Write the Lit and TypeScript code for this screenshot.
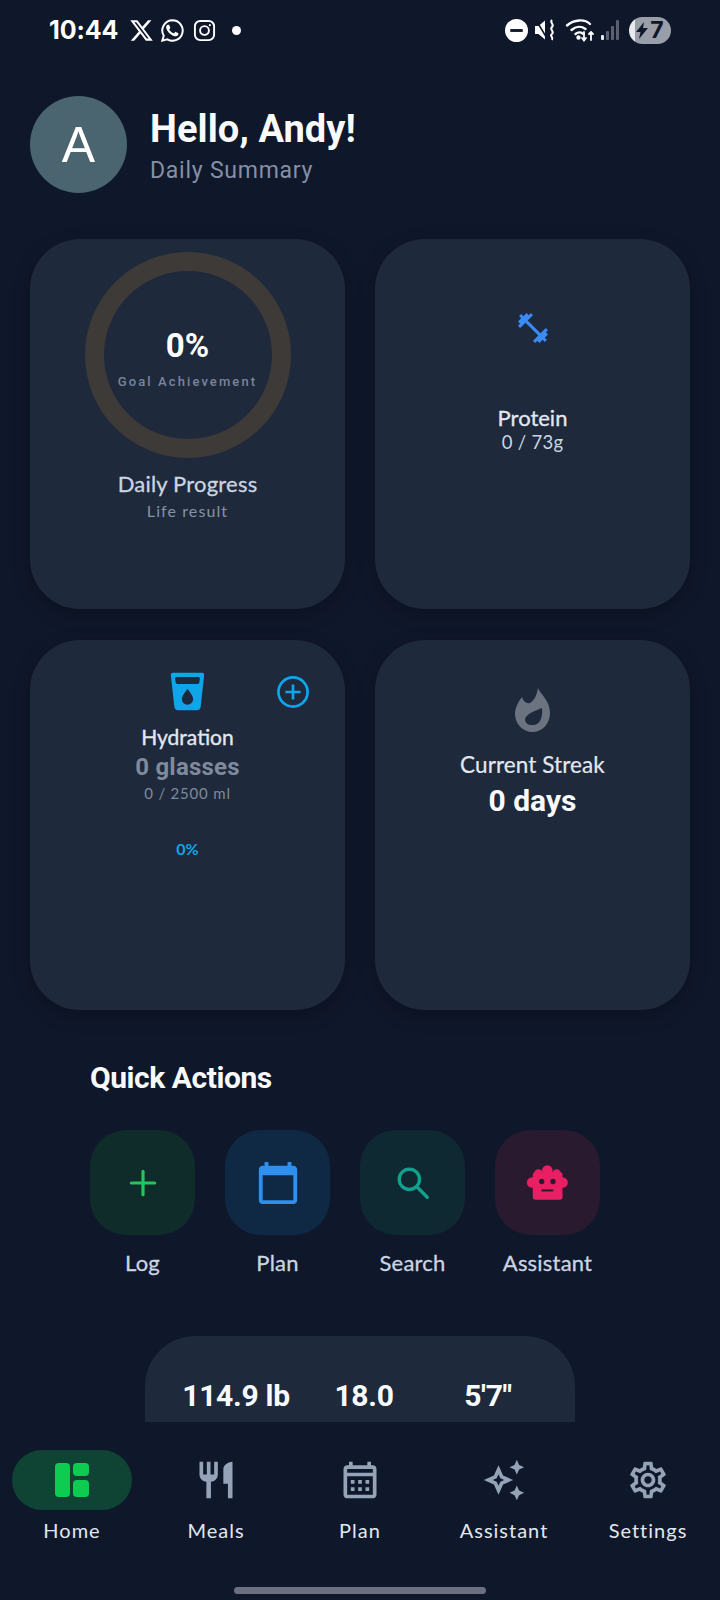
import {LitElement, html, css} from 'lit';
import {customElement} from 'lit/decorators.js';

const P = {
  dumbbell: 'M20.57 14.86L22 13.43 20.57 12 17 15.57 8.43 7 12 3.43 10.57 2 9.14 3.43 7.71 2 5.57 4.14 4.14 2.71 2.71 4.14l1.43 1.43L2 7.71l1.43 1.43L2 10.57 3.43 12 7 8.43 15.57 17 12 20.57 13.43 22l1.43-1.43L16.29 22l2.14-2.14 1.43 1.43 1.43-1.43-1.43-1.43L22 16.29z',
  cup: 'M4.2 2h15.6c.7 0 1.2.6 1.1 1.2L19 20.2c-.1 1-1 1.8-2 1.8H7c-1 0-1.9-.8-2-1.8L3.1 3.2C3 2.6 3.5 2 4.2 2zM6.2 4.2c-.5 0-.8.4-.8.8l.3 2.2c.1.4.4.8.9.8h10.8c.5 0 .8-.4.9-.8l.3-2.2c0-.4-.3-.8-.8-.8zM12 10.6s-3 3.4-3 5.4c0 1.66 1.34 3 3 3s3-1.34 3-3c0-2-3-5.4-3-5.4z',
  calendar: 'M20 3h-1V1h-2v2H7V1H5v2H4c-1.1 0-2 .9-2 2v16c0 1.1.9 2 2 2h16c1.1 0 2-.9 2-2V5c0-1.1-.9-2-2-2zm0 18H4V8h16v13z',
  fork: 'M11 9H9V2H7v7H5V2H3v7c0 2.12 1.66 3.84 3.75 3.97V22h2.5v-9.03C11.34 12.84 13 11.12 13 9V2h-2v7zm5-3v8h2.5v8H21V2c-2.76 0-5 2.24-5 4z',
  month: 'M19 4h-1V2h-2v2H8V2H6v2H5c-1.11 0-1.99.9-1.99 2L3 20c0 1.1.89 2 2 2h14c1.1 0 2-.9 2-2V6c0-1.1-.9-2-2-2zm0 16H5V10h14v10zm0-12H5V6h14v2zM9 14H7v-2h2v2zm4 0h-2v-2h2v2zm4 0h-2v-2h2v2zm-8 4H7v-2h2v2zm4 0h-2v-2h2v2zm4 0h-2v-2h2v2z',
  sparkle: 'M19 9l1.25-2.75L23 5l-2.75-1.25L19 1l-1.25 2.75L15 5l2.75 1.25L19 9zm-7.5.5L9 4 6.5 9.5 1 12l5.5 2.5L9 20l2.5-5.5L17 12l-5.5-2.5zM9.99 12.99L9 15.17l-.99-2.18L5.83 12l2.18-.99L9 8.83l.99 2.18 2.18.99-2.18.99zM19 15l-1.25 2.75L15 19l2.75 1.25L19 23l1.25-2.75L23 19l-2.75-1.25L19 15z',
  gear: 'M19.43 12.98c.04-.32.07-.64.07-.98 0-.34-.03-.66-.07-.98l2.11-1.65c.19-.15.24-.42.12-.64l-2-3.46c-.09-.16-.26-.25-.44-.25-.06 0-.12.01-.17.03l-2.49 1c-.52-.4-1.08-.73-1.69-.98l-.38-2.65C14.46 2.18 14.25 2 14 2h-4c-.25 0-.46.18-.49.42l-.38 2.65c-.61.25-1.17.59-1.69.98l-2.49-1c-.06-.02-.12-.03-.18-.03-.17 0-.34.09-.43.25l-2 3.46c-.13.22-.07.49.12.64l2.11 1.65c-.04.32-.07.65-.07.98 0 .33.03.66.07.98l-2.11 1.65c-.19.15-.24.42-.12.64l2 3.46c.09.16.26.25.44.25.06 0 .12-.01.17-.03l2.49-1c.52.4 1.08.73 1.69.98l.38 2.65c.03.24.24.42.49.42h4c.25 0 .46-.18.49-.42l.38-2.65c.61-.25 1.17-.59 1.69-.98l2.49 1c.06.02.12.03.18.03.17 0 .34-.09.43-.25l2-3.46c.12-.22.07-.49-.12-.64l-2.11-1.65zm-1.98-1.71c.04.31.05.52.05.73 0 .21-.02.43-.05.73l-.14 1.13.89.7 1.08.84-.7 1.21-1.27-.51-1.04-.42-.9.68c-.43.32-.84.56-1.25.73l-1.06.43-.16 1.13-.2 1.35h-1.4l-.19-1.35-.16-1.13-1.06-.43c-.43-.18-.83-.41-1.23-.71l-.91-.7-1.06.43-1.27.51-.7-1.21 1.08-.84.89-.7-.14-1.13c-.03-.31-.05-.54-.05-.74s.02-.43.05-.73l.14-1.13-.89-.7-1.08-.84.7-1.21 1.27.51 1.04.42.9-.68c.43-.32.84-.56 1.25-.73l1.06-.43.16-1.13.2-1.35h1.39l.19 1.35.16 1.13 1.06.43c.43.18.83.41 1.23.71l.91.7 1.06-.43 1.27-.51.7 1.21-1.07.85-.89.7.14 1.13zM12 8c-2.21 0-4 1.79-4 4s1.79 4 4 4 4-1.79 4-4-1.79-4-4-4zm0 6c-1.1 0-2-.9-2-2s.9-2 2-2 2 .9 2 2-.9 2-2 2z',
  x: 'M18.244 2.25h3.308l-7.227 8.26 8.502 11.24H16.17l-5.214-6.817L4.99 21.75H1.68l7.73-8.835L1.254 2.25H8.08l4.713 6.231zm-1.161 17.52h1.833L7.084 4.126H5.117z',
};

const icon = (d: string, size: number, color: string) => html`
  <svg width=${size} height=${size} viewBox="0 0 24 24" style="color:${color}" fill="currentColor" fill-rule="evenodd"><path d=${d}></path></svg>
`;

const actions = [
  {
    label: 'Log',
    bg: '#0f2b2a',
    glyph: html`<svg width="40" height="40" viewBox="0 0 24 24" fill="none" stroke="#22c55e" stroke-width="1.9" stroke-linecap="round"><path d="M12 5v14M5 12h14"></path></svg>`,
  },
  {label: 'Plan', bg: '#0f2844', glyph: icon(P.calendar, 46, '#2f8fec')},
  {
    label: 'Search',
    bg: '#0f2933',
    glyph: html`<svg width="38" height="38" viewBox="0 0 24 24" fill="none" stroke="#14a08c" stroke-width="2.1" stroke-linecap="round"><circle cx="9.7" cy="9.7" r="6.4"></circle><path d="M14.4 14.4L21 21"></path></svg>`,
  },
  {
    label: 'Assistant',
    bg: '#2a1a30',
    glyph: html`<svg width="45" height="37" viewBox="525 160 135 112" fill="#e91e63">
      <circle cx="592" cy="180" r="16"></circle>
      <circle cx="565" cy="190" r="14"></circle>
      <circle cx="620" cy="190" r="14"></circle>
      <circle cx="546" cy="216" r="16"></circle>
      <circle cx="638" cy="216" r="16"></circle>
      <rect x="548" y="185" width="90" height="83" rx="8"></rect>
      <circle cx="575" cy="213" r="8" fill="#2a1a30"></circle>
      <circle cx="609" cy="213" r="8" fill="#2a1a30"></circle>
      <rect x="574" y="237" width="36" height="6" fill="#2a1a30"></rect>
    </svg>`,
  },
];

const nav = [
  {label: 'Meals', d: P.fork},
  {label: 'Plan', d: P.month},
  {label: 'Assistant', d: P.sparkle},
  {label: 'Settings', d: P.gear},
];

@customElement('app-root')
export class AppRoot extends LitElement {
  static styles = css`
    :host {
      display: block;
      width: 720px;
      height: 1600px;
      background: #0f172a;
      color: #fff;
      font-family: Roboto, sans-serif;
      overflow: hidden;
    }
    svg { display: block; flex: none; }

    .page { display: flex; flex-direction: column; height: 1600px; }
    .scroll { height: 1422px; flex: none; overflow: hidden; }

    .status {
      height: 60px;
      display: flex;
      align-items: center;
      padding: 0 49px 0 49px;
      justify-content: space-between;
    }
    .status-left, .status-right { display: flex; align-items: center; }
    .time { font: 700 25px/30px Inter, sans-serif; letter-spacing: -0.1px; margin-right: 11px; }
    .status-left svg { margin-right: 6px; }
    .dot { width: 9px; height: 9px; border-radius: 50%; background: #fff; margin-left: 10px; }
    .battery {
      width: 42px;
      height: 27px;
      border-radius: 14px;
      background: linear-gradient(90deg, #e8eaee 0 6px, #9a9ea8 6px);
      color: #0f172a;
      display: flex;
      align-items: center;
      justify-content: center;
      gap: 2px;
      font: 700 23px/27px Inter, sans-serif;
      margin-left: 9px;
    }

    .header { display: flex; align-items: center; gap: 23px; padding: 36px 30px 0; }
    .avatar {
      width: 97px;
      height: 97px;
      border-radius: 50%;
      background: #4a6470;
      display: flex;
      align-items: center;
      justify-content: center;
      font: 400 50px/1 "Liberation Sans", sans-serif;
    }
    .hello { padding-top: 3px; }
    h1 { margin: 0; font: 700 38px/44px Roboto, sans-serif; letter-spacing: 0.1px; color: #f8fafc; }
    .sub { font: 400 23px/30px Roboto, sans-serif; color: #8590a6; letter-spacing: 0.75px; margin-top: 5px; }

    .grid {
      display: grid;
      grid-template-columns: 315px 315px;
      grid-auto-rows: 370px;
      gap: 31px 30px;
      padding: 46px 30px 0;
    }
    .card {
      background: #1e293b;
      border-radius: 50px;
      box-shadow: 0 6px 18px rgba(0, 0, 0, 0.25);
      display: flex;
      flex-direction: column;
      align-items: center;
      text-align: center;
      font-family: Lato, sans-serif;
      position: relative;
    }
    .ring {
      box-sizing: border-box;
      width: 206px;
      height: 206px;
      margin-top: 13px;
      border: 19px solid #3d3a38;
      border-radius: 50%;
      display: flex;
      flex-direction: column;
      align-items: center;
      padding-top: 56px;
    }
    .pct { font: 700 33px/38px Roboto, sans-serif; }
    .goal { font: 500 13px/18px Roboto, sans-serif; letter-spacing: 2.1px; color: #7a859b; margin-top: 8px; white-space: nowrap; }
    .title { font-size: 22px; line-height: 26px; color: #cbd5e1; -webkit-text-stroke: 0.3px currentColor; }
    .note { font-size: 16px; line-height: 20px; color: #8892a6; letter-spacing: 1.1px; margin-top: 4px; }
    .progress-title { margin-top: 13px; letter-spacing: 0.2px; }

    .protein-icon { margin-top: 71px; }
    .protein-title { margin-top: 59px; color: #e2e8f0; }
    .protein-val { font-size: 18.5px; line-height: 23px; color: #cbd5e1; letter-spacing: 0.3px; }

    .cup { margin-top: 29px; }
    .add { position: absolute; top: 33px; left: 244px; }
    .hyd-title { font-size: 21px; line-height: 24px; margin-top: 11px; color: #e2e8f0; -webkit-text-stroke: 0.35px currentColor; }
    .glasses { font: 700 24px/28px Roboto, sans-serif; color: #7f8a9c; letter-spacing: 0.2px; margin-top: 4px; }
    .ml { font-size: 15px; line-height: 20px; color: #7f8a9c; letter-spacing: 0.8px; margin-top: 2px; }
    .hyd-pct { font-size: 16px; line-height: 20px; font-weight: 700; color: #0ea5e9; margin-top: 36px; }

    .flame { margin-top: 48px; }
    .streak-title { font-size: 22.5px; line-height: 26px; color: #e2e8f0; margin-top: 20px; letter-spacing: 0.1px; -webkit-text-stroke: 0.2px currentColor; }
    .streak-val { font: 700 30px/36px Roboto, sans-serif; color: #f8fafc; margin-top: 5px; }

    .quick { padding: 50px 90px 0; }
    h2 { margin: 0; font: 700 30px/36px Roboto, sans-serif; letter-spacing: -0.45px; color: #f8fafc; }
    .tiles { display: flex; gap: 30px; margin-top: 34px; }
    .tile { width: 105px; display: flex; flex-direction: column; align-items: center; font-family: Lato, sans-serif; }
    .tile-box { width: 105px; height: 105px; border-radius: 36px; display: flex; align-items: center; justify-content: center; }
    .tile-label { margin-top: 15px; font-size: 22px; line-height: 26px; letter-spacing: 0.2px; color: #cbd5e1; white-space: nowrap; -webkit-text-stroke: 0.3px currentColor; }

    .stats {
      margin: 60px 0 0 145px;
      width: 430px;
      height: 160px;
      box-sizing: border-box;
      background: #1e293b;
      border-radius: 50px;
      display: grid;
      grid-template-columns: 182px 74px 174px;
      padding-top: 41px;
      font: 700 30px/38px Roboto, sans-serif;
      letter-spacing: -0.3px;
      color: #f8fafc;
      text-align: center;
      align-items: start;
    }

    .nav {
      display: grid;
      grid-template-columns: repeat(5, 144px);
      padding-top: 28px;
      font-family: Lato, sans-serif;
    }
    .nav-item { display: flex; flex-direction: column; align-items: center; }
    .nav-icon { width: 120px; height: 60px; border-radius: 30px; display: flex; align-items: center; justify-content: center; }
    .nav-icon.on { background: #0f4434; }
    .nav-label { margin-top: 7px; font-size: 20px; line-height: 26px; color: #e2e8f0; letter-spacing: 1px; }

    .home-bar { width: 252px; height: 7px; border-radius: 4px; background: #6b6f80; margin: 44px auto 0; }
  `;

  protected render() {
    return html`
      <div class="page">
        <div class="scroll">
          <div class="status">
            <div class="status-left">
              <span class="time">10:44</span>
              ${icon(P.x, 25, '#fff')}
              <svg width="25" height="25" viewBox="0 0 24 24" fill="none" stroke="#fff" stroke-width="1.9">
                <path d="M12 2.2a9.8 9.8 0 0 0-8.4 14.8L2.2 21.8l4.9-1.3A9.8 9.8 0 1 0 12 2.2z"></path>
                <path fill="#fff" stroke="none" d="M17.2 14.3c-.3-.15-1.7-.85-2-.95-.27-.1-.47-.15-.67.15-.2.3-.75.95-.92 1.13-.17.2-.34.22-.63.08-.3-.15-1.24-.46-2.36-1.46-.87-.78-1.46-1.74-1.63-2.03-.17-.3-.02-.46.13-.6.13-.13.3-.35.44-.52.15-.17.2-.3.3-.5.1-.2.05-.37-.03-.51-.07-.15-.66-1.6-.9-2.18-.24-.57-.49-.5-.67-.5h-.56c-.2 0-.51.07-.78.37-.27.3-1.02 1-1.02 2.44 0 1.44 1.05 2.84 1.2 3.03.15.2 2.07 3.16 5 4.43 2.93 1.26 2.93.84 3.46.79.53-.05 1.7-.7 1.94-1.37.24-.67.24-1.25.17-1.37-.08-.12-.27-.2-.57-.34z"></path>
              </svg>
              <svg width="23" height="23" viewBox="0 0 24 24" fill="none" stroke="#fff" stroke-width="2" style="margin-left:2px">
                <rect x="2" y="2" width="20" height="20" rx="5.5"></rect>
                <circle cx="12" cy="12" r="4.6"></circle>
                <circle cx="17.6" cy="6.4" r="1.1" fill="#fff" stroke="none"></circle>
              </svg>
              <span class="dot"></span>
            </div>
            <div class="status-right">
              <svg width="23" height="23" viewBox="0 0 24 24" style="margin-right:7px">
                <circle cx="12" cy="12" r="12" fill="#fff"></circle>
                <rect x="5.5" y="10.5" width="13" height="3" fill="#0f172a"></rect>
              </svg>
              <svg width="21" height="22" viewBox="0 0 21 22" fill="#fff" style="margin-right:9px">
                <path d="M0 7h3.5L10 1.5v19L3.5 15H0z"></path>
                <path d="M17 1c-3 3 3 4 0 7c-3 3 3 4 0 7c-3 2 2 3 0 6" fill="none" stroke="#fff" stroke-width="2"></path>
                <path d="M1 1l12 20" stroke="#0f172a" stroke-width="1.5"></path>
              </svg>
              <svg width="30" height="26" viewBox="0 0 30 26" fill="none" stroke="#fff" stroke-width="2.4" stroke-linecap="round" style="margin-right:6px">
                <path d="M2 8.5C9 2 20 2 25 7"></path>
                <path d="M6.5 13c4.5-4 10-4 14 -1"></path>
                <path d="M10.5 17c2.5-2 5-2 7 -.5"></path>
                <circle cx="13.5" cy="20.5" r="1" fill="#fff"></circle>
                <path d="M19 15v8M17 21l2 2.5 2-2.5M26 23v-8M24 17l2-2 2 2" stroke-width="1.8"></path>
              </svg>
              <svg width="19" height="20" viewBox="0 0 19 20" fill="#5a6070">
                <rect x="0" y="15" width="3" height="5" rx="1" fill="#e8eaee"></rect>
                <rect x="5" y="11" width="3" height="9" rx="1"></rect>
                <rect x="10" y="6" width="3" height="14" rx="1"></rect>
                <rect x="15" y="0" width="3" height="20" rx="1"></rect>
              </svg>
              <div class="battery">
                <svg width="12" height="17" viewBox="0 0 12 17" fill="#0f172a"><path d="M8 0L0 10h4.5L3 17l9-11H7z"></path></svg>
                <span>7</span>
              </div>
            </div>
          </div>

          <div class="header">
            <div class="avatar">A</div>
            <div class="hello">
              <h1>Hello, Andy!</h1>
              <div class="sub">Daily Summary</div>
            </div>
          </div>

          <div class="grid">
            <div class="card">
              <div class="ring">
                <div class="pct">0%</div>
                <div class="goal">Goal Achievement</div>
              </div>
              <div class="title progress-title">Daily Progress</div>
              <div class="note">Life result</div>
            </div>

            <div class="card">
              <div class="protein-icon">${icon(P.dumbbell, 36, '#3b8bf6')}</div>
              <div class="title protein-title">Protein</div>
              <div class="protein-val">0 / 73g</div>
            </div>

            <div class="card">
              <div class="cup">${icon(P.cup, 45, '#0ea5e9')}</div>
              <div class="add">
                <svg width="38" height="38" viewBox="0 0 24 24" fill="none" stroke="#0ea5e9" stroke-width="1.7">
                  <circle cx="12" cy="12" r="9.2"></circle>
                  <path d="M12 7.2v9.6M7.2 12h9.6"></path>
                </svg>
              </div>
              <div class="hyd-title">Hydration</div>
              <div class="glasses">0 glasses</div>
              <div class="ml">0 / 2500 ml</div>
              <div class="hyd-pct">0%</div>
            </div>

            <div class="card">
              <div class="flame">
                <svg width="35" height="44" viewBox="0 0 35 44" fill="#6b7380" fill-rule="evenodd">
                  <path d="M23 0C25 6 35 12 35 25C35 36 27 44 17.5 44C8 44 0 36 0 26C0 20 3 14 7 9C8 13 12 16 15 15C19 13 22 7 23 0ZM10 31C12 25 20 23 27 20C28 29 25 38 17 37C13 37 10 35 10 31Z"></path>
                </svg>
              </div>
              <div class="streak-title">Current Streak</div>
              <div class="streak-val">0 days</div>
            </div>
          </div>

          <div class="quick">
            <h2>Quick Actions</h2>
            <div class="tiles">
              ${actions.map(a => html`
                <div class="tile">
                  <div class="tile-box" style="background:${a.bg}">${a.glyph}</div>
                  <div class="tile-label">${a.label}</div>
                </div>
              `)}
            </div>
          </div>

          <div class="stats">
            <div>114.9 lb</div>
            <div>18.0</div>
            <div>5'7"</div>
          </div>
        </div>

        <div class="nav">
          <div class="nav-item">
            <div class="nav-icon on">
              <svg width="34" height="34" viewBox="0 0 34 34" fill="#0ecb52">
                <rect x="0" y="0" width="15" height="34" rx="4"></rect>
                <rect x="18" y="0" width="16" height="13" rx="4"></rect>
                <rect x="18" y="17" width="16" height="17" rx="4"></rect>
              </svg>
            </div>
            <div class="nav-label">Home</div>
          </div>
          ${nav.map(n => html`
            <div class="nav-item">
              <div class="nav-icon">${icon(n.d, 44, '#94a3b8')}</div>
              <div class="nav-label">${n.label}</div>
            </div>
          `)}
        </div>
        <div class="home-bar"></div>
      </div>
    `;
  }
}
